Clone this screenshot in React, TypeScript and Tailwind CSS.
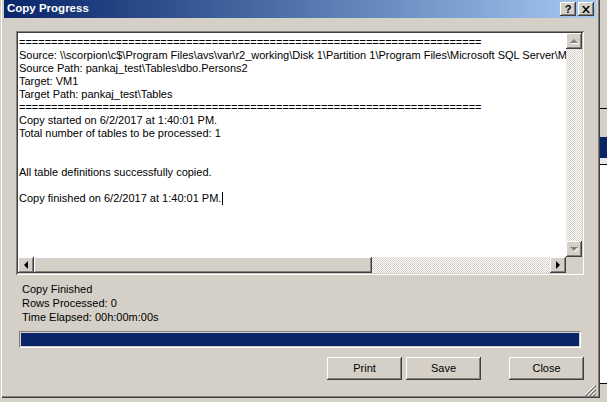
import React from 'react';

const raised =
  'shadow-[inset_-1px_-1px_#404040,inset_1px_1px_#ffffff,inset_-2px_-2px_#808080,inset_2px_2px_#d4d0c8]';
const sunken =
  'shadow-[inset_1px_1px_#808080,inset_-1px_-1px_#ffffff,inset_2px_2px_#404040,inset_-2px_-2px_#d4d0c8]';
const checker = 'bg-[repeating-conic-gradient(#d4d0c8_0_25%,#ffffff_0_50%)] bg-[length:2px_2px]';

const rule = '='.repeat(72);

const logLines = [
  rule,
  'Source: \\\\scorpion\\c$\\Program Files\\avs\\var\\r2_working\\Disk 1\\Partition 1\\Program Files\\Microsoft SQL Server\\M',
  'Source Path: pankaj_test\\Tables\\dbo.Persons2',
  'Target: VM1',
  'Target Path: pankaj_test\\Tables',
  rule,
  'Copy started on 6/2/2017 at 1:40:01 PM.',
  'Total number of tables to be processed: 1',
  '',
  '',
  'All table definitions successfully copied.',
  '',
];

const Arrow = ({ dir, disabled }: { dir: 'up' | 'down' | 'left' | 'right'; disabled?: boolean }) => {
  const pts = {
    up: '4,1 8,5 0,5',
    down: '0,1 8,1 4,5',
    left: '5,0 5,8 1,4',
    right: '1,0 1,8 5,4',
  }[dir];
  const vertical = dir === 'up' || dir === 'down';
  return (
    <svg width={vertical ? 9 : 6} height={vertical ? 6 : 9} viewBox={vertical ? '0 0 9 6' : '0 0 6 9'}>
      {disabled && <polygon points={pts} fill="#ffffff" transform="translate(1,1)" />}
      <polygon points={pts} fill={disabled ? '#808080' : '#000000'} />
    </svg>
  );
};

const ScrollButton = ({ dir, disabled }: { dir: 'up' | 'down' | 'left' | 'right'; disabled?: boolean }) => (
  <div className={`w-4 h-4 shrink-0 bg-[#d4d0c8] flex items-center justify-center ${raised}`}>
    <Arrow dir={dir} disabled={disabled} />
  </div>
);

const TitleButton = ({ children }: { children: React.ReactNode }) => (
  <div
    className={`w-4 h-[14px] bg-[#d4d0c8] flex items-center justify-center text-[11px] font-bold leading-none text-black ${raised}`}
  >
    {children}
  </div>
);

const PushButton = ({ label }: { label: string }) => (
  <button className={`w-[75px] h-[23px] bg-[#d4d0c8] text-[11px] text-black ${raised}`}>{label}</button>
);

export default function App() {
  return (
    <div className="w-[607px] h-[402px] flex bg-[#d4d0c8] overflow-hidden font-['Liberation_Sans',Arial,sans-serif]">
      <div className="w-[600px] h-[402px] flex flex-col shrink-0">
        {/* Dialog window */}
        <div className="h-[398px] flex flex-col bg-[#d4d0c8] pl-[4px] pr-[4px] shadow-[inset_1px_0_#d4d0c8,inset_2px_0_#ffffff,inset_-1px_-1px_#404040,inset_-2px_-2px_#808080]">
          {/* Title bar */}
          <div className="h-[18px] flex items-center justify-between bg-gradient-to-r from-[#0a246a] to-[#a6caf0] pl-[3px] pr-[2px]">
            <span className="text-white font-bold text-[11.5px] leading-none">Copy Progress</span>
            <div className="flex gap-[2px]">
              <TitleButton>?</TitleButton>
              <TitleButton>
                <svg width="8" height="7" viewBox="0 0 8 7">
                  <path d="M0 0h2l2 2.5L6 0h2L5 3.5 8 7H6L4 4.5 2 7H0l3-3.5z" fill="#000" />
                </svg>
              </TitleButton>
            </div>
          </div>

          {/* Log box */}
          <div className={`mt-[13px] mx-[12px] h-[244px] p-[2px] bg-white flex flex-col ${sunken}`}>
            <div className="flex flex-1 min-h-0">
              <div className="flex-1 min-w-0 overflow-hidden bg-white pt-[3px] pl-[1px] text-[11px] leading-[13px] text-black">
                {logLines.map((line, i) => (
                  <div key={i} className="h-[13px] whitespace-nowrap">
                    {line}
                  </div>
                ))}
                <div className="h-[13px] whitespace-nowrap flex items-center">
                  Copy finished on 6/2/2017 at 1:40:01 PM.
                  <span className="inline-block w-px h-[13px] bg-black ml-[1px]" />
                </div>
              </div>
              <div className="w-4 flex flex-col">
                <ScrollButton dir="up" disabled />
                <div className={`flex-1 ${checker}`} />
                <ScrollButton dir="down" disabled />
              </div>
            </div>
            <div className="h-4 flex">
              <ScrollButton dir="left" />
              <div className={`w-[338px] h-4 bg-[#d4d0c8] ${raised}`} />
              <div className={`flex-1 ${checker}`} />
              <ScrollButton dir="right" />
              <div className="w-4 h-4 bg-[#d4d0c8]" />
            </div>
          </div>

          {/* Status */}
          <div className="mt-[7px] ml-[18px] text-[11px] leading-[14px] text-black">
            <div>Copy Finished</div>
            <div>Rows Processed: 0</div>
            <div>Time Elapsed: 00h:00m:00s</div>
          </div>

          {/* Progress bar */}
          <div className="mt-[7px] ml-[15px] w-[562px] h-[17px] border border-t-[#808080] border-l-[#808080] border-b-white border-r-white p-px">
            <div className="w-full h-full bg-[#0a246a]" />
          </div>

          {/* Buttons */}
          <div className="mt-[9px] mr-[12px] flex justify-end">
            <PushButton label="Print" />
            <div className="w-[4px]" />
            <PushButton label="Save" />
            <div className="w-[28px]" />
            <PushButton label="Close" />
          </div>

          <div className="flex-1 flex items-end justify-end pb-[2px]">
            <svg width="12" height="12" viewBox="0 0 12 12">
              <path d="M11 1L1 11M11 5L5 11M11 9L9 11" stroke="#ffffff" strokeWidth="1" />
              <path d="M12 1L1 12M12 2L2 12M12 5L5 12M12 6L6 12M12 9L9 12M12 10L10 12" stroke="#808080" strokeWidth="1" />
            </svg>
          </div>
        </div>
        <div className="flex-1 bg-[#d4d0c8]" />
      </div>

      {/* Background window edge */}
      <div className="flex-1 flex flex-col">
        <div className="h-[108px] bg-[#d4d0c8]" />
        <div className="h-px bg-black" />
        <div className="h-[28px] bg-[#d4d0c8]" />
        <div className="h-[21px] bg-[#0a246a]" />
        <div className="h-[6px] bg-[#e8e8e8]" />
        <div className="h-px bg-black" />
        <div className="h-[218px] bg-white" />
        <div className="h-px bg-black" />
        <div className="flex-1 bg-[#d4d0c8]" />
      </div>
    </div>
  );
}
